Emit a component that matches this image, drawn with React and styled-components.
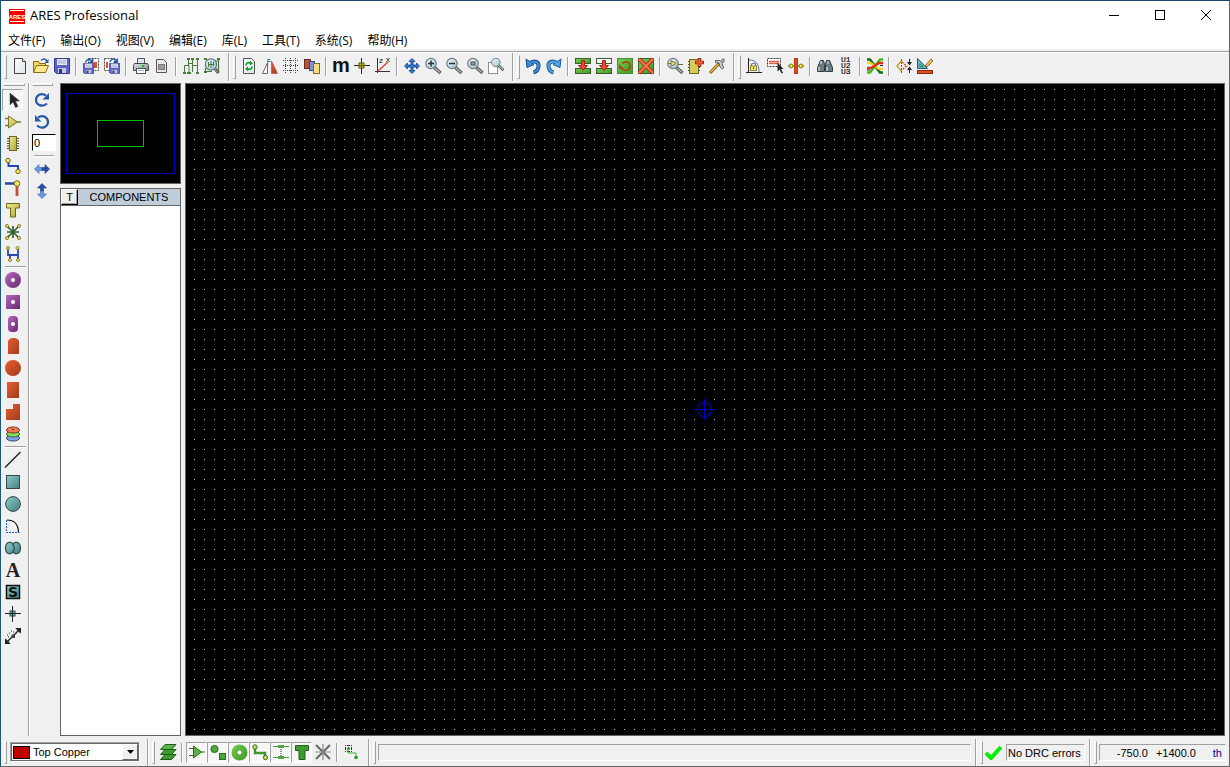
import React, { useState } from 'react';
import styled, { createGlobalStyle, css } from 'styled-components';

const GlobalStyle = createGlobalStyle`
  * {
    box-sizing: border-box;
  }

  body {
    margin: 0;
    background: #f0f0f0;
    font-family: 'Liberation Sans', 'Noto Sans CJK SC', sans-serif;
    font-size: 11px;
    color: #000;
  }
`;

/* ---------- icons ---------- */

const Lens = ({ children }) => (
  <>
    <path d="M9.500 9.500l6 5.500" stroke="#555" strokeWidth="3.400" />
    <path d="M10 10l5 4.500" stroke="#b4b4b4" strokeWidth="1.400" />
    <circle cx="6" cy="5.500" r="5.200" fill="url(#glass)" stroke="#6c7a84" strokeWidth="1.200" />
    {children}
  </>
);

const Floppy = ({ s = 16 }) => (
  <svg width={s} height={s} viewBox="0 0 16 16" x={s < 16 ? 0 : undefined} y={s < 16 ? 16 - s : undefined}>
    <path d="M.5.5h15v15h-13l-2-2z" fill="#5d63c4" stroke="#343a8c" />
    <rect x="3" y="1" width="10" height="6" fill="#e4e6f2" />
    <path d="M4 3h8M4 5h8" stroke="#a4aacc" />
    <rect x="4" y="10" width="8" height="5" fill="#c4c8d8" />
    <rect x="5" y="11" width="3" height="4" fill="#343a8c" />
  </svg>
);

const Ends = ({ points, color = '#f4ec50' }) =>
  points.map(([x, y]) => (
    <circle key={`${x}-${y}`} cx={x} cy={y} r="1.500" fill={color} stroke="#6a6414" strokeWidth=".8" />
  ));

const icons = {
  newFile: (
    <>
      <path d="M2.500.5h8l3 3v12h-11z" fill="url(#paper)" stroke="#444" />
      <path d="M10.500.5v3h3" fill="#fff" stroke="#444" />
    </>
  ),
  open: (
    <>
      <path d="M.5 14.500v-11h5l1 2h6v3" fill="#f5d860" stroke="#8a6a14" />
      <path d="M.5 14.500l3-7h12l-3 7z" fill="#ffe98c" stroke="#8a6a14" />
      <path d="M8 2.500c2-2 4-2 6 .5" fill="none" stroke="#2c5a9c" strokeWidth="1.400" />
      <path d="M15.500 1v4h-4z" fill="#2c5a9c" />
    </>
  ),
  save: <Floppy />,
  importFile: (
    <>
      <rect x="5.500" y=".5" width="10" height="12" fill="#fff" stroke="#444" strokeDasharray="2 1" />
      <rect x="11" y="4" width="3" height="6" fill="#d8512c" />
      <Floppy s={11} />
      <path d="M2.500 4.500c1-3 3-4 6-2" fill="none" stroke="#2458a8" strokeWidth="1.500" />
      <path d="M10.500 0v5h-5z" fill="#2458a8" />
    </>
  ),
  exportFile: (
    <>
      <rect x=".5" y=".5" width="10" height="12" fill="#fff" stroke="#444" strokeDasharray="2 1" />
      <rect x="2" y="4" width="2" height="6" fill="#d8512c" />
      <svg x="5" y="0" width="11" height="16">
        <Floppy s={11} />
      </svg>
      <path d="M6 4c1-3 4-4 6-2" fill="none" stroke="#2458a8" strokeWidth="1.500" />
      <path d="M14 0v5h-5z" fill="#2458a8" />
    </>
  ),
  print: (
    <>
      <path d="M4.500 6.500v-6h7v6" fill="#dbe8f4" stroke="#555" />
      <path d="M1.500 5.500h13l1 2v5h-15v-5z" fill="url(#metal)" stroke="#444" />
      <rect x="3.500" y="10.500" width="9" height="5" fill="#fff" stroke="#555" />
      <path d="M5 12.500h6" stroke="#9cb0c4" />
      <rect x="9" y="7" width="2" height="2" fill="#0c0" />
    </>
  ),
  printArea: (
    <>
      <path d="M2.500 1.500h7l3 3v10h-10z" fill="#e8e8e8" stroke="#555" />
      <rect x="4.500" y="6.500" width="6" height="5" fill="#9a9a9a" stroke="#333" strokeDasharray="1 1" />
    </>
  ),
  netlist: (
    <>
      <path d="M1.500 14v-6.500h4.500v7M5.500 2v5.500M9.500 14v-6.500h5M14.500 2v12M9.500 2v6M5.500 5.500h4" fill="none" stroke="#4a7a3c" />
      <path d="M4 0h3v2h-3zM8 0h3v2h-3zM13 0h3v2h-3zM0 14h3v2h-3zM4 14h4v2h-4zM13 14h3v2h-3z" fill="#4a7a3c" />
    </>
  ),
  netSearch: (
    <>
      <path d="M1.500 10v5M14.500 1v14M2 13.500h6M10 3h5" stroke="#4a7a3c" strokeWidth="1.200" />
      <path d="M0 0h3v2h-3zM13 0h3v2h-3zM0 13h3v2h-3z" fill="#4a7a3c" />
      <path d="M10.500 10l4 5" stroke="#555" strokeWidth="3" />
      <path d="M11 11l3 3.500" stroke="#b4b4b4" />
      <circle cx="7" cy="6.500" r="5.600" fill="url(#glass)" stroke="#607884" strokeWidth="1.200" />
      <path d="M4.500 4v5M7 3v7M9.500 4v4M4.500 6.500h5" stroke="#4a7a3c" />
    </>
  ),
  redraw: (
    <>
      <path d="M2.500.5h8l3 3v12h-11z" fill="url(#paper)" stroke="#555" />
      <path d="M5 7.500c0-3 3-3.500 5-2M11 8.500c0 3-3 3.500-5 2" fill="none" stroke="#169c2c" strokeWidth="1.600" />
      <path d="M9 2.500l3 3-3 2zM7 8.500v5l-3-3z" fill="#169c2c" />
    </>
  ),
  flip: (
    <>
      <path d="M5.500 5v10.500h-5z" fill="#fff" stroke="#555" strokeWidth=".9" />
      <path d="M9.500 3v12.500h6z" fill="url(#orange)" stroke="#b44020" strokeWidth=".6" />
      <text x="5" y="5" fontSize="6" fontFamily="Liberation Sans">F</text>
    </>
  ),
  grid: <path d="M0 2.500h16M0 7.500h16M0 12.500h16M2.500 0v16M7.500 0v16M12.500 0v16" stroke="#444" strokeDasharray="1 1" shapeRendering="crispEdges" />,
  layers: (
    <>
      <rect x=".5" y="1.500" width="6" height="9" fill="#b8503c" stroke="#6c2c20" />
      <rect x="5.500" y="3.500" width="5" height="9" fill="#7c94e0" stroke="#34488c" />
      <rect x="9.500" y="5.500" width="6" height="10" fill="#f4e080" stroke="#7c6c24" />
    </>
  ),
  metric: <text x="-1" y="14" fontSize="20" fontWeight="bold" fontFamily="Liberation Sans">m</text>,
  origin: (
    <>
      <path d="M0 7.500h16M7.500 0v16" stroke="#222" shapeRendering="crispEdges" />
      <rect x="5" y="5" width="5" height="5" fill="#c4c020" stroke="#5c5810" />
      <path d="M5 7.500h5M7.500 5v5" stroke="#5c5810" />
    </>
  ),
  polar: (
    <>
      <path d="M2.500 0v15M0 13.500h15" stroke="#333" />
      <path d="M3 13l10-9" stroke="#d8402c" strokeWidth="1.300" />
      <text x="4" y="5" fontSize="8" fontFamily="Liberation Sans">z</text>
      <text x="11" y="4" fontSize="8" fontFamily="Liberation Sans">x</text>
    </>
  ),
  pan: (
    <path
      d="M8 .5l3 3h-2v3.500h3.500v-2l3 3-3 3v-2h-3.500v3.500h2l-3 3-3-3h2v-3.500h-3.500v2l-3-3 3-3v2h3.500v-3.500h-2z"
      fill="#2f7fe0"
      stroke="#143c7c"
      strokeWidth=".8"
    />
  ),
  zoomIn: <Lens><path d="M3 5.500h6M6 2.500v6" stroke="#333" strokeWidth="1.500" /></Lens>,
  zoomOut: <Lens><path d="M3 5.500h6" stroke="#333" strokeWidth="1.500" /></Lens>,
  zoomAll: <Lens><rect x="4" y="4" width="4" height="3" fill="#999" stroke="#555" /></Lens>,
  zoomArea: (
    <>
      <rect x=".5" y="4.500" width="9" height="11" fill="#fff" stroke="#222" strokeDasharray="1 1" />
      <svg x="3" width="13" height="13" viewBox="0 0 16 16"><Lens /></svg>
    </>
  ),
  undo: (
    <>
      <path d="M5 5c5-3 9-1 8.500 3.500-.3 3-2 5-5 6" fill="none" stroke="#1c4c8c" strokeWidth="4" />
      <path d="M1 1l1 8.500 7-3z" fill="#3c8cd8" stroke="#1c4c8c" />
      <path d="M5 5c5-3 9-1 8.500 3.500-.3 3-2 5-5 6" fill="none" stroke="#3c8cd8" strokeWidth="2.200" />
    </>
  ),
  redo: (
    <>
      <path d="M11 5c-5-3-9-1-8.500 3.500.3 3 2 5 5 6" fill="none" stroke="#1c5c9c" strokeWidth="4" />
      <path d="M15 1l-1 8.500-7-3z" fill="#50a4e0" stroke="#1c5c9c" />
      <path d="M11 5c-5-3-9-1-8.500 3.500.3 3 2 5 5 6" fill="none" stroke="#50a4e0" strokeWidth="2.200" />
    </>
  ),
  blockCopy: (
    <>
      <rect x=".5" y=".5" width="15" height="5" fill="url(#green)" stroke="#3c5c2c" />
      <rect x=".5" y="10.500" width="15" height="5" fill="url(#green)" stroke="#3c5c2c" />
      <path d="M6.500 2.500h3v5h3l-4.500 5-4.500-5h3z" fill="#f04830" stroke="#a02414" />
    </>
  ),
  blockMove: (
    <>
      <rect x=".5" y=".5" width="15" height="5" fill="#fff" stroke="#3c5c2c" />
      <rect x=".5" y="10.500" width="15" height="5" fill="url(#green)" stroke="#3c5c2c" />
      <path d="M6.500 2.500h3v5h3l-4.500 5-4.500-5h3z" fill="#f04830" stroke="#a02414" />
    </>
  ),
  blockRotate: (
    <>
      <rect x=".5" y=".5" width="15" height="15" fill="url(#green)" stroke="#4c8c2c" />
      <path d="M5 5.500c4-3.500 8-1 8 2.500 0 4-5 6-8 3" fill="none" stroke="#b83c18" strokeWidth="1.600" />
      <path d="M2 6v5h5z" fill="#b83c18" />
    </>
  ),
  blockDelete: (
    <>
      <rect x=".5" y=".5" width="15" height="15" fill="url(#green)" stroke="#3c5c2c" />
      <path d="M1 1l14 14M15 1l-14 14" stroke="#a83418" strokeWidth="4" />
      <path d="M1 1l14 14M15 1l-14 14" stroke="#f47048" strokeWidth="2.400" />
    </>
  ),
  pick: (
    <>
      <path d="M11 6.500h5" stroke="#6c6420" />
      <Lens><path d="M4 2.500l5 3-5 3z" fill="#e4dc74" stroke="#7c7830" /><path d="M1 5.500h3" stroke="#7c7830" /></Lens>
    </>
  ),
  makePackage: (
    <>
      <path d="M0 3.500h12M0 6.500h12M0 9.500h12M0 12.500h12" stroke="#444" />
      <rect x="1.500" y="1.500" width="9" height="14" fill="#d4cc54" stroke="#6c6820" />
      <path d="M11.500 0v9M7 4.500h9" stroke="#982c14" strokeWidth="3.600" />
      <path d="M11.500 1v7M8 4.500h7" stroke="#f45c34" strokeWidth="1.800" />
    </>
  ),
  hammer: (
    <>
      <path d="M1 15l9-9.500" stroke="#7c5410" strokeWidth="3" />
      <path d="M1.500 14.500l8-8.500" stroke="#e8b848" strokeWidth="1.400" />
      <path d="M6.500 2.500h4l1.500 1 1.500-2.500h1.500v3h-2l.5 4 1.500 1-1.500 2-2.500-2-1-4-3.500-.5z" fill="#c4d4dc" stroke="#444" strokeWidth=".8" />
    </>
  ),
  lock: (
    <>
      <path d="M2.500 0v15M0 14.500h16" stroke="#222" />
      <path d="M3 2c7 0 10 4 10 12" fill="#fff" stroke="#4c74b4" />
      <path d="M5.500 8.500v-1.500c0-2.500 4-2.500 4 0v1.500" fill="none" stroke="#777" strokeWidth="1.200" />
      <rect x="4.500" y="8" width="6" height="4.500" fill="#f0e470" stroke="#8c8430" />
      <path d="M7.500 9v2" stroke="#6c6014" />
    </>
  ),
  selectFilter: (
    <>
      <rect x=".5" y=".5" width="13" height="8" fill="#fff" stroke="#333" strokeDasharray="2 1" />
      <path d="M2 3.500h10M2 5.500h10" stroke="#e06040" strokeWidth="1.500" />
      <path d="M10.500 4.500v9l2-2 2 4 1.500-.5-2-4h2.500z" fill="#222" />
    </>
  ),
  trackStyle: (
    <>
      <rect x="6.500" y=".5" width="3" height="15" fill="#e44820" stroke="#b83818" />
      <path d="M0 8h16" stroke="#6c6414" />
      <circle cx="3" cy="8" r="2" fill="#e8e040" stroke="#6c6414" strokeWidth=".8" />
      <circle cx="13" cy="8" r="2" fill="#e8e040" stroke="#6c6414" strokeWidth=".8" />
      <rect x="7" y="6" width="2" height="4" fill="#e44820" />
    </>
  ),
  find: (
    <>
      <path d="M3.500 2.500h3l1 4v7h-7v-4zM12.500 2.500h-3l-1 4v7h7v-4z" fill="#6c7c84" stroke="#303c40" />
      <path d="M2 9v4M10 9v4M4 3v3M11 3v3" stroke="#bccacf" strokeWidth="1.500" />
    </>
  ),
  annotate: (
    <text fontSize="8" fontFamily="Liberation Mono" stroke="#111" strokeWidth=".2">
      <tspan x="3" y="4">U1</tspan>
      <tspan x="3" y="10">U2</tspan>
      <tspan x="3" y="16">U3</tspan>
    </text>
  ),
  autoroute: (
    <>
      <path d="M0 1.500h3l10 13h3" fill="none" stroke="#1c6c1c" strokeWidth="2.500" />
      <path d="M0 5h4l8 6h4" fill="none" stroke="#e8d820" strokeWidth="2.200" />
      <path d="M0 14.500h3l10-13h3" fill="none" stroke="#48b820" strokeWidth="2.500" />
      <path d="M0 10h4l8-5h4" fill="none" stroke="#e02c14" strokeWidth="2.400" />
      <path d="M0 12h3M13 7.500h3" stroke="#222" />
    </>
  ),
  connectivity: (
    <>
      <path d="M6 2l-5 6 5 6" fill="none" stroke="#b8a41c" strokeWidth="1.300" />
      <path d="M5.500 1v14" fill="none" stroke="#3468b4" strokeDasharray="2 1" />
      <path d="M6 4l4.500 4-4.500 4" fill="none" stroke="#d84828" strokeWidth="1.300" strokeDasharray="2 1" />
      <path d="M13.500 1v5M13.500 15v-5" stroke="#222" />
      <path d="M11 4h5l-2.500 3.500zM11 12h5l-2.500-3.500z" fill="#222" />
    </>
  ),
  designRules: (
    <>
      <path d="M.5.5v10h10z" fill="#60b8c4" stroke="#24606c" />
      <path d="M3 6v2.500h3z" fill="#f0f0f0" stroke="#24606c" strokeWidth=".8" />
      <path d="M8 8l6-7 2 2-6 6z" fill="#f0c048" stroke="#7c5014" strokeWidth=".8" />
      <rect x=".5" y="12.500" width="15" height="3" fill="#e05028" stroke="#88280c" />
    </>
  ),

  pointer: <path d="M5 1v12l3-3 2.500 5.500 2.500-1-2.500-5.500h4z" fill="#222" stroke="#555" strokeWidth=".6" />,
  component: (
    <>
      <path d="M0 4.500h5M0 11.500h5M12 8h4" stroke="#7c7830" strokeWidth="1.400" />
      <path d="M3.500 2v12l9-6z" fill="url(#brass)" stroke="#7c7830" />
    </>
  ),
  package: (
    <>
      <path d="M2 2.500h12M2 5h12M2 7.500h12M2 10h12M2 12.500h12" stroke="#444" />
      <rect x="4.500" y=".5" width="7" height="14" fill="url(#brass)" stroke="#6c6820" />
    </>
  ),
  track: (
    <>
      <path d="M3.500 3v5h9.500v5" fill="none" stroke="#2848b0" strokeWidth="2" />
      <circle cx="3" cy="2.500" r="2.200" fill="#f0ec58" stroke="#6c6820" />
      <circle cx="13" cy="13.500" r="2.200" fill="#f0ec58" stroke="#6c6820" />
    </>
  ),
  via: (
    <>
      <path d="M0 3.500h11" stroke="#2848a0" strokeWidth="2.500" />
      <path d="M12 5v11" stroke="#c05030" strokeWidth="2.800" />
      <circle cx="12" cy="3.500" r="2.800" fill="#f0ec58" stroke="#6c6820" />
    </>
  ),
  zone: <path d="M1.500 1.500h13v4.500h-4v9h-5v-9h-4z" fill="url(#brass)" stroke="#6c6820" />,
  ratsnest: (
    <>
      <path d="M2 2l12 12M14 2l-12 12M8 2v12M2 8h12" stroke="#306030" strokeWidth="1.700" />
      <Ends points={[[2, 2], [14, 2], [2, 14], [14, 14]]} />
    </>
  ),
  highlight: (
    <>
      <path d="M3 3v6h10M13 3v10M5 9v5" fill="none" stroke="#2848b0" strokeWidth="1.800" />
      <Ends points={[[3, 2], [12.500, 2], [5, 14], [13, 14]]} />
    </>
  ),

  padRound: (
    <>
      <circle cx="8" cy="8" r="8" fill="url(#purple)" />
      <circle cx="8" cy="8" r="2" fill="#fff" />
    </>
  ),
  padSquare: (
    <>
      <rect x="1" y="1" width="14" height="14" fill="url(#purple)" />
      <circle cx="8" cy="8" r="2" fill="#fff" />
    </>
  ),
  padDil: (
    <>
      <rect x="3" y="0" width="10" height="16" rx="4" fill="url(#purple)" />
      <circle cx="8" cy="8" r="2" fill="#fff" />
    </>
  ),
  padEdge: <path d="M3 16v-12c0-5.300 11-5.300 11 0v12z" fill="url(#orange)" />,
  padCircle: <circle cx="8" cy="8" r="8" fill="url(#orange)" />,
  padRect: <rect x="2" y="0" width="12" height="16" fill="url(#orange)" />,
  padPoly: <path d="M8 0h7v16h-14v-11h7z" fill="url(#orange)" />,
  padStack: (
    <>
      <ellipse cx="8" cy="12" rx="6.500" ry="3" fill="#7ca4ec" stroke="#34486c" />
      <ellipse cx="8" cy="8" rx="6.500" ry="3" fill="#84dc5c" stroke="#34602c" />
      <ellipse cx="8" cy="4" rx="6.500" ry="3" fill="#f47850" stroke="#7c3420" />
      <rect x="7" y="3" width="2" height="1" fill="#333" />
    </>
  ),

  line: <path d="M0 15.500l15.500-15.500" stroke="#222" strokeWidth="1.500" />,
  box: <rect x="1.500" y="1.500" width="13" height="13" fill="url(#teal)" stroke="#34484c" />,
  circle: <circle cx="8" cy="8" r="7.400" fill="url(#teal)" stroke="#34484c" />,
  arc: (
    <>
      <path d="M1.500 2v12.500h13" fill="none" stroke="#1c5cd0" strokeDasharray="2 1" />
      <path d="M2 2c7 0 11 4 11.500 12" fill="#fff" stroke="#111" strokeWidth="1.200" />
    </>
  ),
  path: (
    <path
      d="M8 4.500c2-4 7.500-2.500 7.500 3.500s-5.500 7.500-7.500 3.500c-2 4-7.500 2.500-7.500-3.500s5.500-7.500 7.500-3.500zM8 4.500c1.500 2 1.500 5 0 7"
      fill="url(#teal)"
      stroke="#34484c"
      strokeWidth="1.200"
    />
  ),
  text: <text x="8" y="15" fontSize="20" fontWeight="bold" textAnchor="middle" fill="#222" fontFamily="Liberation Serif">A</text>,
  symbol: (
    <>
      <rect x="1.500" y="1.500" width="13" height="13" fill="url(#teal)" stroke="#111" strokeWidth="1.500" />
      <text x="8" y="13" fontSize="14" fontWeight="bold" textAnchor="middle" fill="#111" fontFamily="DejaVu Sans">S</text>
    </>
  ),
  marker: (
    <>
      <rect x="5" y="5" width="5" height="5" fill="#60b4b0" stroke="#245454" />
      <path d="M0 7.500h16M7.500 0v16" stroke="#222" shapeRendering="crispEdges" />
    </>
  ),
  dimension: (
    <>
      <path d="M1 15l14-14" stroke="#222" strokeWidth="1.500" />
      <path d="M10.500 0h5.500v5.500l-1.500-1-3-3zM0 10.500v5.500h5.500l-1-1.500-3-3z" fill="#222" />
      <rect x="6.500" y="6.500" width="3.500" height="3.500" fill="#444" />
      <path d="M2 7h1M4 5h1M6 3h1M3 9h1M8 4h1" stroke="#222" />
    </>
  ),

  rotateCw: (
    <>
      <path d="M12 3.500c-5-3.500-10 0-10 4.500s6 8 11 3.500" fill="none" stroke="#2858a8" strokeWidth="2.200" />
      <path d="M15 1v6.500h-6.500z" fill="#2858a8" />
    </>
  ),
  rotateCcw: (
    <>
      <path d="M4 3.500c5-3.500 10 0 10 4.500s-6 8-11 3.500" fill="none" stroke="#2858a8" strokeWidth="2.200" />
      <path d="M1 1v6.500h6.500z" fill="#2858a8" />
    </>
  ),
  mirrorX: (
    <>
      <path d="M5 3.500v3h3v3h-3v3l-4.500-4.500z" fill="#6c98e4" stroke="#3c64a8" strokeWidth=".6" />
      <path d="M11 3.500v3h-3v3h3v3l4.500-4.500z" fill="#2450a8" stroke="#1c3c84" strokeWidth=".6" />
    </>
  ),
  mirrorY: (
    <>
      <path d="M3.500 5h3v3h3v-3h3l-4.500-4.500z" fill="#2450a8" stroke="#1c3c84" strokeWidth=".6" />
      <path d="M3.500 11h3v-3h3v3h3l-4.500 4.500z" fill="#6c98e4" stroke="#3c64a8" strokeWidth=".6" />
    </>
  ),

  layerStack: (
    <>
      <path d="M5 10.500h11l-4.500 5h-11z" fill="#3c9c30" stroke="#1c5c18" />
      <path d="M5 5.500h11l-4.500 5h-11z" fill="#3c9c30" stroke="#1c5c18" />
      <path d="M5 .5h11l-4.500 5h-11z" fill="#58b848" stroke="#1c5c18" />
    </>
  ),
  gComponent: (
    <>
      <path d="M0 4.500h5M0 11.500h5M12 8h4" stroke="#2c6c24" />
      <path d="M4.500 2v12l8-6z" fill="#58b044" stroke="#2c6c24" />
    </>
  ),
  gShapes: (
    <>
      <circle cx="4.500" cy="5" r="3.600" fill="#4ca83c" stroke="#2c6c24" />
      <rect x="9.500" y="9.500" width="6" height="6" fill="#4ca83c" stroke="#2c6c24" />
    </>
  ),
  gPad: (
    <>
      <circle cx="8.500" cy="8.500" r="8" fill="url(#green)" />
      <circle cx="8.500" cy="8.500" r="2" fill="#fff" />
    </>
  ),
  gTrack: (
    <>
      <path d="M3 4v5h10v4" fill="none" stroke="#3c9430" strokeWidth="2.400" />
      <circle cx="3" cy="3" r="2.200" fill="#c8e060" stroke="#2c6c24" />
      <circle cx="13.500" cy="13.500" r="2.200" fill="#c8e060" stroke="#2c6c24" />
    </>
  ),
  gVia: (
    <>
      <path d="M0 2.500h16M0 13.500h16" stroke="#4ca83c" />
      <path d="M5 2.500h6M5 13.500h6" stroke="#4ca83c" strokeWidth="3" />
      <path d="M8 5v7" stroke="#222" strokeDasharray="1 1" />
    </>
  ),
  gZone: <path d="M1.500 1.500h13v5h-3.500v9h-6v-9h-3.500z" fill="#3c9c30" stroke="#245c1c" />,
  gRats: (
    <>
      <path d="M1 1l14 14M15 1l-14 14" stroke="#666" strokeWidth="2" />
      <path d="M8 0v16M0 8h16" stroke="#888" strokeWidth="1.200" />
    </>
  ),
  gSnap: (
    <>
      <path d="M1 1.500h7M1 4.500h7M1 7.500h7M1.500 1v7M4.500 1v7M7.500 1v7" stroke="#333" strokeDasharray="1 1" />
      <path d="M4 4v5h8v5" fill="none" stroke="#3cac30" />
      <circle cx="4.500" cy="4.500" r="1.500" fill="#24a020" />
      <circle cx="12" cy="13.500" r="1.800" fill="#24a020" />
    </>
  ),
};

const Icon = ({ name }) => (
  <svg width="16" height="16" viewBox="0 0 16 16" fill="#111" overflow="visible" aria-hidden="true">
    {icons[name]}
  </svg>
);

const gradients = [
  ['purple', '#b46cc0', '#68286c'],
  ['orange', '#ec5c30', '#9c3c1c'],
  ['teal', '#8cccc8', '#428080'],
  ['green', '#78cc50', '#3c9828'],
  ['brass', '#f0ec88', '#b0a838'],
  ['glass', '#f0fafc', '#9cbccc'],
  ['paper', '#ffffff', '#dce4ec'],
  ['metal', '#e4e8ec', '#7c8488'],
];

const Gradients = () => (
  <HiddenSvg aria-hidden="true">
    <defs>
      {gradients.map(([id, from, to]) => (
        <linearGradient key={id} id={id} x1="0" y1="0" x2="1" y2="1">
          <stop offset="0" stopColor={from} />
          <stop offset="1" stopColor={to} />
        </linearGradient>
      ))}
    </defs>
  </HiddenSvg>
);

/* ---------- toolbar contents, null is a separator ---------- */

const topGroups = [
  [
    ['newFile', 'New'], ['open', 'Open'], ['save', 'Save'], null,
    ['importFile', 'Import'], ['exportFile', 'Export'], null,
    ['print', 'Print'], ['printArea', 'Print area'], null,
    ['netlist', 'Netlist'], ['netSearch', 'Netlist search'],
  ],
  [
    ['redraw', 'Redraw'], ['flip', 'Flip'], ['grid', 'Grid'], ['layers', 'Layers'], null,
    ['metric', 'Metric'], ['origin', 'Origin'], ['polar', 'Polar'], null,
    ['pan', 'Pan'], ['zoomIn', 'Zoom in'], ['zoomOut', 'Zoom out'], ['zoomAll', 'Zoom all'], ['zoomArea', 'Zoom area'],
  ],
  [
    ['undo', 'Undo'], ['redo', 'Redo'], null,
    ['blockCopy', 'Block copy'], ['blockMove', 'Block move'], ['blockRotate', 'Block rotate'], ['blockDelete', 'Block delete'], null,
    ['pick', 'Pick parts'], ['makePackage', 'Make package'], ['hammer', 'Decompose'],
  ],
  [
    ['lock', 'Trace angle lock'], ['selectFilter', 'Trace selection'], ['trackStyle', 'Auto track necking'], null,
    ['find', 'Find'], ['annotate', 'Annotate'], null,
    ['autoroute', 'Auto router'], null,
    ['connectivity', 'Connectivity'], ['designRules', 'Design rules'],
  ],
];

const modes = [
  ['pointer', 'Selection'], ['component', 'Component'], ['package', 'Package'], ['track', 'Track'],
  ['via', 'Via'], ['zone', 'Zone'], ['ratsnest', 'Ratsnest'], ['highlight', 'Highlight'], null,
  ['padRound', 'Round pad'], ['padSquare', 'Square pad'], ['padDil', 'DIL pad'], ['padEdge', 'Edge pad'],
  ['padCircle', 'Circular SMT pad'], ['padRect', 'Rectangular SMT pad'], ['padPoly', 'Polygonal pad'], ['padStack', 'Pad stack'], null,
  ['line', 'Line'], ['box', 'Box'], ['circle', 'Circle'], ['arc', 'Arc'], ['path', 'Path'],
  ['text', 'Text'], ['symbol', 'Symbol'], ['marker', 'Marker'], ['dimension', 'Dimension'],
];

const filters = [
  ['gComponent', 'Components'], ['gShapes', 'Graphics'], ['gPad', 'Pads'], ['gTrack', 'Tracks'],
  ['gVia', 'Vias'], ['gZone', 'Zones'], ['gRats', 'Connections'],
];

const menus = ['文件(F)', '输出(O)', '视图(V)', '编辑(E)', '库(L)', '工具(T)', '系统(S)', '帮助(H)'];

const App = () => {
  const [mode, setMode] = useState('pointer');
  const [angle, setAngle] = useState('0');
  const [active, setActive] = useState(filters.map(([name]) => name).filter((name) => name !== 'gRats'));

  const toggleFilter = (name) => {
    setActive(active.includes(name) ? active.filter((n) => n !== name) : [...active, name]);
  };

  return (
    <Window>
      <GlobalStyle />
      <Gradients />

      <TitleBar>
        <svg width="16" height="15" viewBox="0 0 16 15" aria-hidden="true">
          <rect width="16" height="15" fill="#f00" />
          <path d="M1 1.500h14M1 12.500h14" stroke="#fff" />
          <text x="8" y="10" fontSize="6" fontWeight="bold" textAnchor="middle" fill="#fff" fontFamily="Liberation Sans">ARES</text>
        </svg>
        <Title>ARES Professional</Title>
        <CaptionButton type="button" aria-label="Minimize">
          <svg width="10" height="10"><path d="M0 5.500h10" stroke="#000" /></svg>
        </CaptionButton>
        <CaptionButton type="button" aria-label="Maximize">
          <svg width="10" height="10"><rect x=".5" y=".5" width="9" height="9" fill="none" stroke="#000" /></svg>
        </CaptionButton>
        <CaptionButton type="button" aria-label="Close">
          <svg width="10" height="10"><path d="M0 0l10 10M10 0l-10 10" stroke="#000" /></svg>
        </CaptionButton>
      </TitleBar>

      <MenuBar>
        {menus.map((menu) => (
          <MenuItem key={menu} type="button">{menu}</MenuItem>
        ))}
      </MenuBar>

      <Toolbar>
        {topGroups.map((group, i) => (
          <ToolGroup key={i} $last={i === topGroups.length - 1}>
            <Grip />
            {group.map((tool, j) =>
              tool ? (
                <ToolButton key={tool[0]} type="button" aria-label={tool[1]}>
                  <Icon name={tool[0]} />
                </ToolButton>
              ) : (
                <Separator key={j} />
              )
            )}
          </ToolGroup>
        ))}
      </Toolbar>

      <Main>
        <ModeColumn $divided>
          <Grip $flat />
          {modes.map((item, i) =>
            item ? (
              <ToolButton
                key={item[0]}
                type="button"
                aria-label={item[1]}
                $tall
                $pressed={mode === item[0]}
                onClick={() => setMode(item[0])}
              >
                <Icon name={item[0]} />
              </ToolButton>
            ) : (
              <Separator key={i} $flat />
            )
          )}
        </ModeColumn>

        <ModeColumn>
          <Grip $flat />
          <ToolButton type="button" aria-label="Rotate clockwise" $tall><Icon name="rotateCw" /></ToolButton>
          <ToolButton type="button" aria-label="Rotate anticlockwise" $tall><Icon name="rotateCcw" /></ToolButton>
          <AngleInput aria-label="Rotation" value={angle} onChange={(e) => setAngle(e.target.value)} />
          <Separator $flat />
          <ToolButton type="button" aria-label="Mirror X" $tall><Icon name="mirrorX" /></ToolButton>
          <ToolButton type="button" aria-label="Mirror Y" $tall><Icon name="mirrorY" /></ToolButton>
        </ModeColumn>

        <Sidebar>
          <Overview>
            <svg width="119" height="99" fill="none" shapeRendering="crispEdges">
              <rect x="5.500" y="9.500" width="108" height="80" stroke="#0000c0" />
              <rect x="36.500" y="36.500" width="46" height="26" stroke="#00c000" />
            </svg>
          </Overview>
          <Selector>
            <SelectorHeader>
              <TagButton type="button">T</TagButton>
              <SelectorTitle>COMPONENTS</SelectorTitle>
            </SelectorHeader>
          </Selector>
        </Sidebar>

        <Board>
          <svg width="100%" height="100%" shapeRendering="crispEdges">
            <defs>
              <pattern id="dots" x="8" y="5" width="10" height="10" patternUnits="userSpaceOnUse">
                <rect width="1" height="1" fill="#c0c0c0" />
              </pattern>
            </defs>
            <rect width="100%" height="100%" fill="url(#dots)" />
            <svg x="50%" y="50%" overflow="visible" fill="none" stroke="#0000c0">
              <path d="M-11 0h21M-.5-10.500v21" />
              <circle cx="-.5" cy="0" r="7" />
            </svg>
          </svg>
        </Board>
      </Main>

      <StatusBar>
        <ToolGroup>
          <Grip />
          <LayerPicker>
            <LayerSelect aria-label="Layer" defaultValue="top">
              <option value="top">Top Copper</option>
              <option value="bottom">Bottom Copper</option>
            </LayerSelect>
            <LayerSwatch />
            <LayerArrow>
              <svg width="7" height="4"><path d="M0 0h7l-3.500 4z" /></svg>
            </LayerArrow>
          </LayerPicker>
        </ToolGroup>
        <ToolGroup>
          <Grip />
          <ToolButton type="button" aria-label="Layer stack"><Icon name="layerStack" /></ToolButton>
          <Separator />
          {filters.map(([name, label]) => (
            <ToolButton
              key={name}
              type="button"
              aria-label={label}
              $pressed={active.includes(name)}
              onClick={() => toggleFilter(name)}
            >
              <Icon name={name} />
            </ToolButton>
          ))}
          <Separator />
          <ToolButton type="button" aria-label="Snap"><Icon name="gSnap" /></ToolButton>
        </ToolGroup>
        <ToolGroup $grow $tight>
          <Grip />
          <Field $grow />
        </ToolGroup>
        <ToolGroup $tight>
          <Grip />
          <CheckMark width="17" height="15" viewBox="0 0 17 15">
            <path d="M1 8l5 5 10-11" fill="none" stroke="#00f000" strokeWidth="4" />
          </CheckMark>
          <Field>
            <DrcText>No DRC errors</DrcText>
          </Field>
        </ToolGroup>
        <ToolGroup $last>
          <Grip />
          <Field>
            <Coordinate>-750.0</Coordinate>
            <Coordinate>+1400.0</Coordinate>
            <Unit>th</Unit>
          </Field>
        </ToolGroup>
      </StatusBar>
    </Window>
  );
};

/* ---------- styles ---------- */

const HiddenSvg = styled.svg`
  position: absolute;
  width: 0;
  height: 0;
`;

const Window = styled.div`
  display: flex;
  flex-direction: column;
  min-height: 100vh;
  border: 1px solid #646464;
  border-top-color: #1c3f6c;
  border-left-color: #1d5878;
  background: #f0f0f0;
  user-select: none;
`;

const TitleBar = styled.header`
  display: flex;
  align-items: center;
  height: 30px;
  padding-left: 8px;
  background: #fff;
`;

const Title = styled.h1`
  flex: 1;
  margin: 0;
  padding: 0 0 2px 5px;
  font: 13px 'Open Sans', 'Noto Sans', sans-serif;
`;

const CaptionButton = styled.button`
  display: flex;
  align-items: center;
  justify-content: center;
  width: 46px;
  height: 30px;
  padding: 0 0 2px;
  border: none;
  background: none;

  &:hover {
    background: #e5e5e5;
  }
`;

const MenuBar = styled.nav`
  display: flex;
  gap: 1px;
  height: 18px;
  background: #fff;
`;

const MenuItem = styled.button`
  padding: 0 7px;
  border: none;
  background: none;
  font: 12px/20px 'Open Sans', 'Noto Sans CJK SC', sans-serif;

  &:hover {
    background: #cce8ff;
  }
`;

const Toolbar = styled.div`
  display: flex;
  height: 30px;
  margin-top: 2px;
  border-top: 1px solid #a0a0a0;
  box-shadow: inset 0 1px #fff;
  padding-top: 1px;
`;

const ToolGroup = styled.div`
  display: flex;
  flex: ${(props) => (props.$grow ? '1' : 'none')};
  padding: 3px;
  ${(props) =>
    !props.$last &&
    css`
      border-right: 1px solid #fff;
      box-shadow: inset -1px 0 #a0a0a0;
      padding-right: ${props.$tight ? '5px' : '7px'};
    `}
`;

const Grip = styled.div`
  flex: none;
  border: 1px solid;
  border-color: #fff #a0a0a0 #a0a0a0 #fff;
  ${(props) =>
    props.$flat
      ? css`
          height: 3px;
          margin: 0 3px 3px 1px;
        `
      : css`
          width: 3px;
          margin: -1px 2px -1px 0;
        `}
`;

const Separator = styled.div`
  flex: none;
  ${(props) =>
    props.$flat
      ? css`
          height: 2px;
          margin: 1px 2px 1px 3px;
          background: linear-gradient(#a0a0a0 50%, #fff 50%);
        `
      : css`
          width: 2px;
          height: 19px;
          margin: 1px 3px;
          background: linear-gradient(90deg, #a0a0a0 50%, #fff 50%);
        `}
`;

const ToolButton = styled.button`
  display: flex;
  flex: none;
  width: 21px;
  height: ${(props) => (props.$tall ? '22px' : '21px')};
  padding: ${(props) => (props.$tall ? '2px' : '1px')} 1px 2px 2px;
  border: 1px solid transparent;
  background: none;

  ${(props) =>
    props.$pressed &&
    css`
      border-color: #a0a0a0 #fff #fff #a0a0a0;
      background: repeating-conic-gradient(#fff 0 25%, #f0f0f0 0 50%) 0 0 / 2px 2px;
    `}
`;

const Main = styled.main`
  display: flex;
  flex: 1;
  padding: 2px 4px 3px 0;
`;

const ModeColumn = styled.div`
  display: flex;
  flex-direction: column;
  width: ${(props) => (props.$divided ? '29px' : '26px')};
  padding-left: 1px;
  ${(props) =>
    props.$divided &&
    css`
      padding-right: 1px;
      border-right: 1px solid #fff;
      box-shadow: inset -1px 0 #a0a0a0;
    `}
`;

const AngleInput = styled.input`
  width: 24px;
  height: 17px;
  margin: 1px 0 3px 1px;
  padding: 0 1px;
  border: 1px solid;
  border-color: #000 #fff #fff #000;
  border-radius: 0;
  background: #fff;
  font: 11px 'Liberation Sans', sans-serif;
`;

const Sidebar = styled.aside`
  display: flex;
  flex-direction: column;
  flex: none;
  gap: 4px;
  width: 121px;
  margin: 0 4px;
`;

const Overview = styled.div`
  display: flex;
  border: 1px solid #646464;
  background: #000;
`;

const Selector = styled.section`
  flex: 1;
  border: 1px solid #646464;
  background: #fff;
`;

const SelectorHeader = styled.div`
  display: flex;
  height: 17px;
  border-bottom: 1px solid #646464;
  background: #bfcddb;
`;

const TagButton = styled.button`
  width: 17px;
  padding: 0;
  border: 1px solid;
  border-color: #fff #000 #000 #fff;
  background: #f0f0f0;
  box-shadow: inset -1px -1px #a0a0a0;
  font: 11px/13px 'Liberation Sans', sans-serif;
`;

const SelectorTitle = styled.h2`
  flex: 1;
  margin: 0;
  font: 11px/16px 'Liberation Sans', sans-serif;
  text-align: center;
`;

const Board = styled.section`
  display: flex;
  flex: 1;
  min-width: 0;
  border: 1px solid #646464;
  background: #000;
`;

const StatusBar = styled.footer`
  display: flex;
  height: 27px;
`;

const LayerPicker = styled.div`
  position: relative;
  width: 130px;
  margin-left: 1px;
  margin-right: 1px;
`;

const LayerSelect = styled.select`
  appearance: none;
  width: 100%;
  height: 20px;
  padding: 0 20px 0 22px;
  border: 1px solid;
  border-color: #a0a0a0 #fff #fff #a0a0a0;
  border-radius: 0;
  outline: 1px solid #696969;
  outline-offset: -2px;
  background: #fff;
  font: 11px 'Liberation Sans', sans-serif;
  color: #000;
`;

const LayerSwatch = styled.span`
  position: absolute;
  top: 4px;
  left: 3px;
  width: 17px;
  height: 13px;
  border: 1px solid #000;
  background: #c00000;
  pointer-events: none;
`;

const LayerArrow = styled.span`
  position: absolute;
  top: 2px;
  right: 2px;
  display: flex;
  align-items: center;
  justify-content: center;
  width: 16px;
  height: 16px;
  border: 1px solid;
  border-color: #fff #696969 #696969 #fff;
  background: #f0f0f0;
  pointer-events: none;
`;

const Field = styled.div`
  display: flex;
  align-items: center;
  flex: ${(props) => (props.$grow ? '1' : 'none')};
  height: 17px;
  margin-top: 2px;
  border: 1px solid;
  border-color: #a0a0a0 #fff #fff #a0a0a0;
`;

const CheckMark = styled.svg`
  margin: 3px 4px 0 0;
`;

const DrcText = styled.span`
  width: 77px;
  padding-left: 1px;
  white-space: nowrap;
`;

const Coordinate = styled.span`
  width: 48px;
  text-align: right;
`;

const Unit = styled.span`
  width: 29px;
  padding-right: 3px;
  text-align: right;
  color: #000080;
`;

export default App;
